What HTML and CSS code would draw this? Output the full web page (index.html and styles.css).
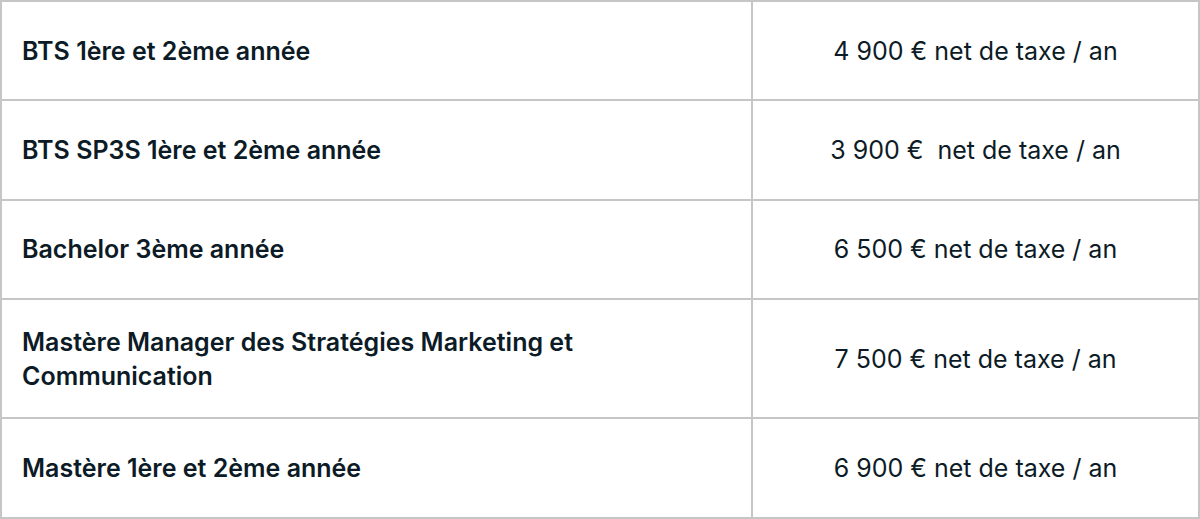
FILE: index.html
```html
<!DOCTYPE html>
<html lang="fr">
<head>
<meta charset="utf-8">
<title>Tarifs</title>
<link rel="stylesheet" href="styles.css">
</head>
<body>
<table class="prices">
  <colgroup>
    <col class="col-name">
    <col class="col-price">
  </colgroup>
  <tbody>
    <tr>
      <td class="name">BTS 1ère et 2ème année</td>
      <td class="price">4 900 € net de taxe / an</td>
    </tr>
    <tr>
      <td class="name">BTS SP3S 1ère et 2ème année</td>
      <td class="price">3 900 €&nbsp; net de taxe / an</td>
    </tr>
    <tr>
      <td class="name">Bachelor 3ème année</td>
      <td class="price">6 500 € net de taxe / an</td>
    </tr>
    <tr>
      <td class="name">Mastère Manager des Stratégies Marketing et Communication</td>
      <td class="price">7 500 € net de taxe / an</td>
    </tr>
    <tr>
      <td class="name">Mastère 1ère et 2ème année</td>
      <td class="price">6 900 € net de taxe / an</td>
    </tr>
  </tbody>
</table>
</body>
</html>
```
FILE: styles.css
```css
html, body {
  margin: 0;
  padding: 0;
  background: #ffffff;
}

.prices {
  width: 1200px;
  border-collapse: collapse;
  font-family: Inter, "Noto Sans", sans-serif;
  font-size: 25px;
  line-height: 34px;
  color: #0c1b26;
  table-layout: fixed;
}

.col-name {
  width: 751px;
}

.prices tr {
  height: 99.4px;
}

.prices td {
  border: 2px solid #c6c6c6;
  padding: 24.5px 20px;
  vertical-align: middle;
}

.prices .name {
  font-weight: 600;
}

.prices .price {
  text-align: center;
  font-weight: 400;
}
```
